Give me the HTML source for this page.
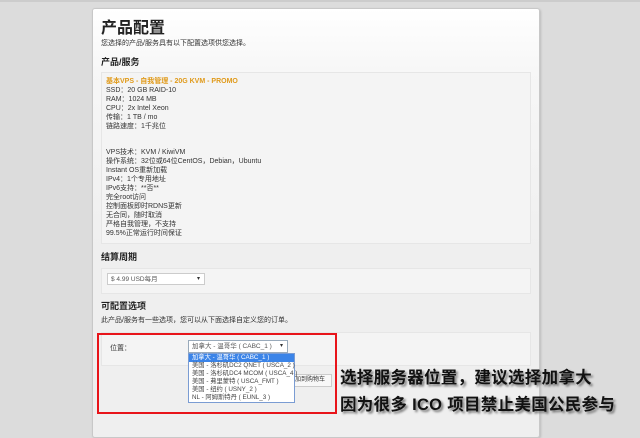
<!DOCTYPE html>
<html><head><meta charset="utf-8"><style>
*{margin:0;padding:0;box-sizing:border-box}
body{width:640px;height:426px;background:#dcdcdc;position:relative;overflow:hidden;font-family:"Liberation Sans","Noto Sans CJK SC",sans-serif;color:#333}
.card{position:absolute;left:92px;top:8px;width:448px;height:430px;background:linear-gradient(#fff 0px,#f7f7f7 60px,#efefef 240px,#efefef);border:1px solid #c8c8c8;border-radius:3px;box-shadow:1px 1px 2px #bbb}
.topbar{position:absolute;left:0;top:0;width:640px;height:2px;background:#ccc}
.a{position:absolute;white-space:nowrap}
.box{position:absolute;background:#f4f4f4;border:1px solid #e6e6e6}
.t{font-size:7px;line-height:9px}
h1{position:absolute;font-size:16px;font-weight:bold;color:#222}
h3{position:absolute;font-size:9px;font-weight:bold;color:#222}
.sel{position:absolute;background:#fff;border:1px solid #ccc;font-size:6.5px;color:#555;padding-left:3px;line-height:11px}
.sel:after{content:"▾";position:absolute;right:4px;top:0;font-size:6px;color:#333}
.ov{position:absolute;left:340px;font-size:16.5px;font-weight:bold;color:#111;text-shadow:2px 2px 2px #777;white-space:nowrap;letter-spacing:0.3px}
</style></head><body>
<div class="topbar"></div>
<div class="card"></div>
<h1 class="a" style="left:101px;top:14px">产品配置</h1>
<div class="a t" style="left:101px;top:39px">您选择的产品/服务具有以下配置选项供您选择。</div>
<h3 class="a" style="left:101px;top:55px">产品/服务</h3>
<div class="box" style="left:101px;top:72px;width:430px;height:172px"></div>
<div class="a t" style="left:106px;top:77px">
<span style="color:#e09a1a;font-weight:bold">基本VPS - 自我管理 - 20G KVM - PROMO</span><br>SSD：20 GB RAID-10<br>RAM：1024 MB<br>CPU：2x Intel Xeon<br>传输：1 TB / mo<br>链路速度：1千兆位</div>
<div class="a t" style="left:106px;top:148px">VPS技术：KVM / KiwiVM<br>操作系统：32位或64位CentOS，Debian，Ubuntu<br>Instant OS重新加载<br>IPv4：1个专用地址<br>IPv6支持：**否**<br>完全root访问<br>控制面板即时RDNS更新<br>无合同，随时取消<br>严格自我管理，不支持<br>99.5%正常运行时间保证</div>
<h3 class="a" style="left:101px;top:250px">结算周期</h3>
<div class="box" style="left:101px;top:268px;width:430px;height:26px"></div>
<div class="sel" style="left:107px;top:273px;width:98px;height:12px">$ 4.99 USD每月</div>
<h3 class="a" style="left:101px;top:299px">可配置选项</h3>
<div class="a t" style="left:101px;top:316px">此产品/服务有一些选项，您可以从下面选择自定义您的订单。</div>
<div class="box" style="left:101px;top:332px;width:430px;height:34px"></div>
<div class="a t" style="left:110px;top:344px">位置：</div>
<div class="a" style="left:290px;top:374px;width:42px;height:13px;background:#f8f8f8;border:1px solid #ccc;font-size:6px;line-height:11px;padding-left:4px;color:#333">加到购物车</div>
<div class="sel" style="left:188px;top:340px;width:100px;height:13px;border-color:#9ab">加拿大 - 温哥华 ( CABC_1 )</div>
<div class="a" style="left:188px;top:353px;width:107px;height:50px;background:#fff;border:1px solid #7a9cd3;font-size:6.3px;line-height:8px;color:#444">
<div style="background:#3b84e8;color:#fff;padding-left:3px">加拿大 - 温哥华 ( CABC_1 )</div>
<div style="padding-left:3px">美国 - 洛杉矶DC2 QNET ( USCA_2 )<br>美国 - 洛杉矶DC4 MCOM ( USCA_4 )<br>美国 - 弗里蒙特 ( USCA_FMT )<br>美国 - 纽约 ( USNY_2 )<br>NL - 阿姆斯特丹 ( EUNL_3 )</div></div>
<div class="a" style="left:97px;top:333px;width:240px;height:81px;border:2px solid #e8141a"></div>
<div class="ov" style="top:364px">选择服务器位置，建议选择加拿大</div>
<div class="ov" style="top:391px">因为很多 ICO 项目禁止美国公民参与</div>
</body></html>
